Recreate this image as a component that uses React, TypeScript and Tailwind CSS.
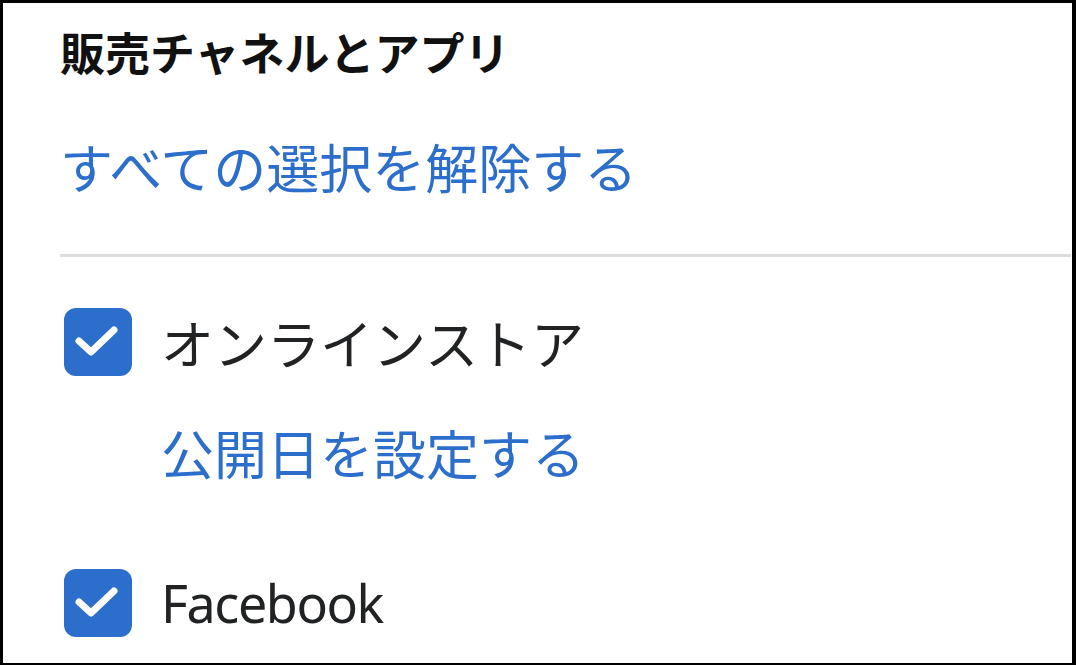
import React from "react";

const CheckBox: React.FC = () => {
  return (
    <div className="flex justify-center items-center w-[68px] h-[68px] rounded-[12px] bg-[#2c6ecb] shrink-0">
      <svg width="68" height="68" viewBox="0 0 68 68" fill="none">
        <path
          d="M15 33 L27 44 L50 22"
          stroke="white"
          strokeWidth="7"
          strokeLinecap="round"
          strokeLinejoin="round"
        />
      </svg>
    </div>
  );
};

type ChannelRowProps = { label: string; latin?: boolean };

const ChannelRow: React.FC<ChannelRowProps> = ({ label, latin }) => {
  return (
    <label className="flex flex-row items-center gap-[29px] ml-[4px]">
      <CheckBox />
      <span
        className={
          latin
            ? "text-[52px] leading-[52px] tracking-[-1.4px] text-[#202223] font-['Noto_Sans','Noto_Sans_CJK_JP',sans-serif]"
            : "text-[53px] leading-[53px] text-[#202223]"
        }
      >
        {label}
      </span>
    </label>
  );
};

export default function App() {
  return (
    <div className="w-[1076px] h-[665px] bg-white border-t-[3px] border-l-[3px] border-r-[4px] border-b-[2px] border-black overflow-hidden font-['Noto_Sans_CJK_JP','Noto_Sans',sans-serif]">
      <section className="flex flex-col pl-[57px]">
        <h2 className="mt-[26px] text-[45px] leading-[45px] font-bold text-[#111111]">
          販売チャネルとアプリ
        </h2>
        <a className="mt-[66px] text-[53px] leading-[53px] text-[#2c6ecb]">
          すべての選択を解除する
        </a>
        <div className="mt-[61px] h-[3px] bg-[#dcdddf] mr-[1px]" />
        <div className="mt-[51px]">
          <ChannelRow label="オンラインストア" />
        </div>
        <a className="mt-[50px] ml-[101px] text-[53px] leading-[53px] text-[#2c6ecb]">
          公開日を設定する
        </a>
        <div className="mt-[90px]">
          <ChannelRow label="Facebook" latin />
        </div>
      </section>
    </div>
  );
}
